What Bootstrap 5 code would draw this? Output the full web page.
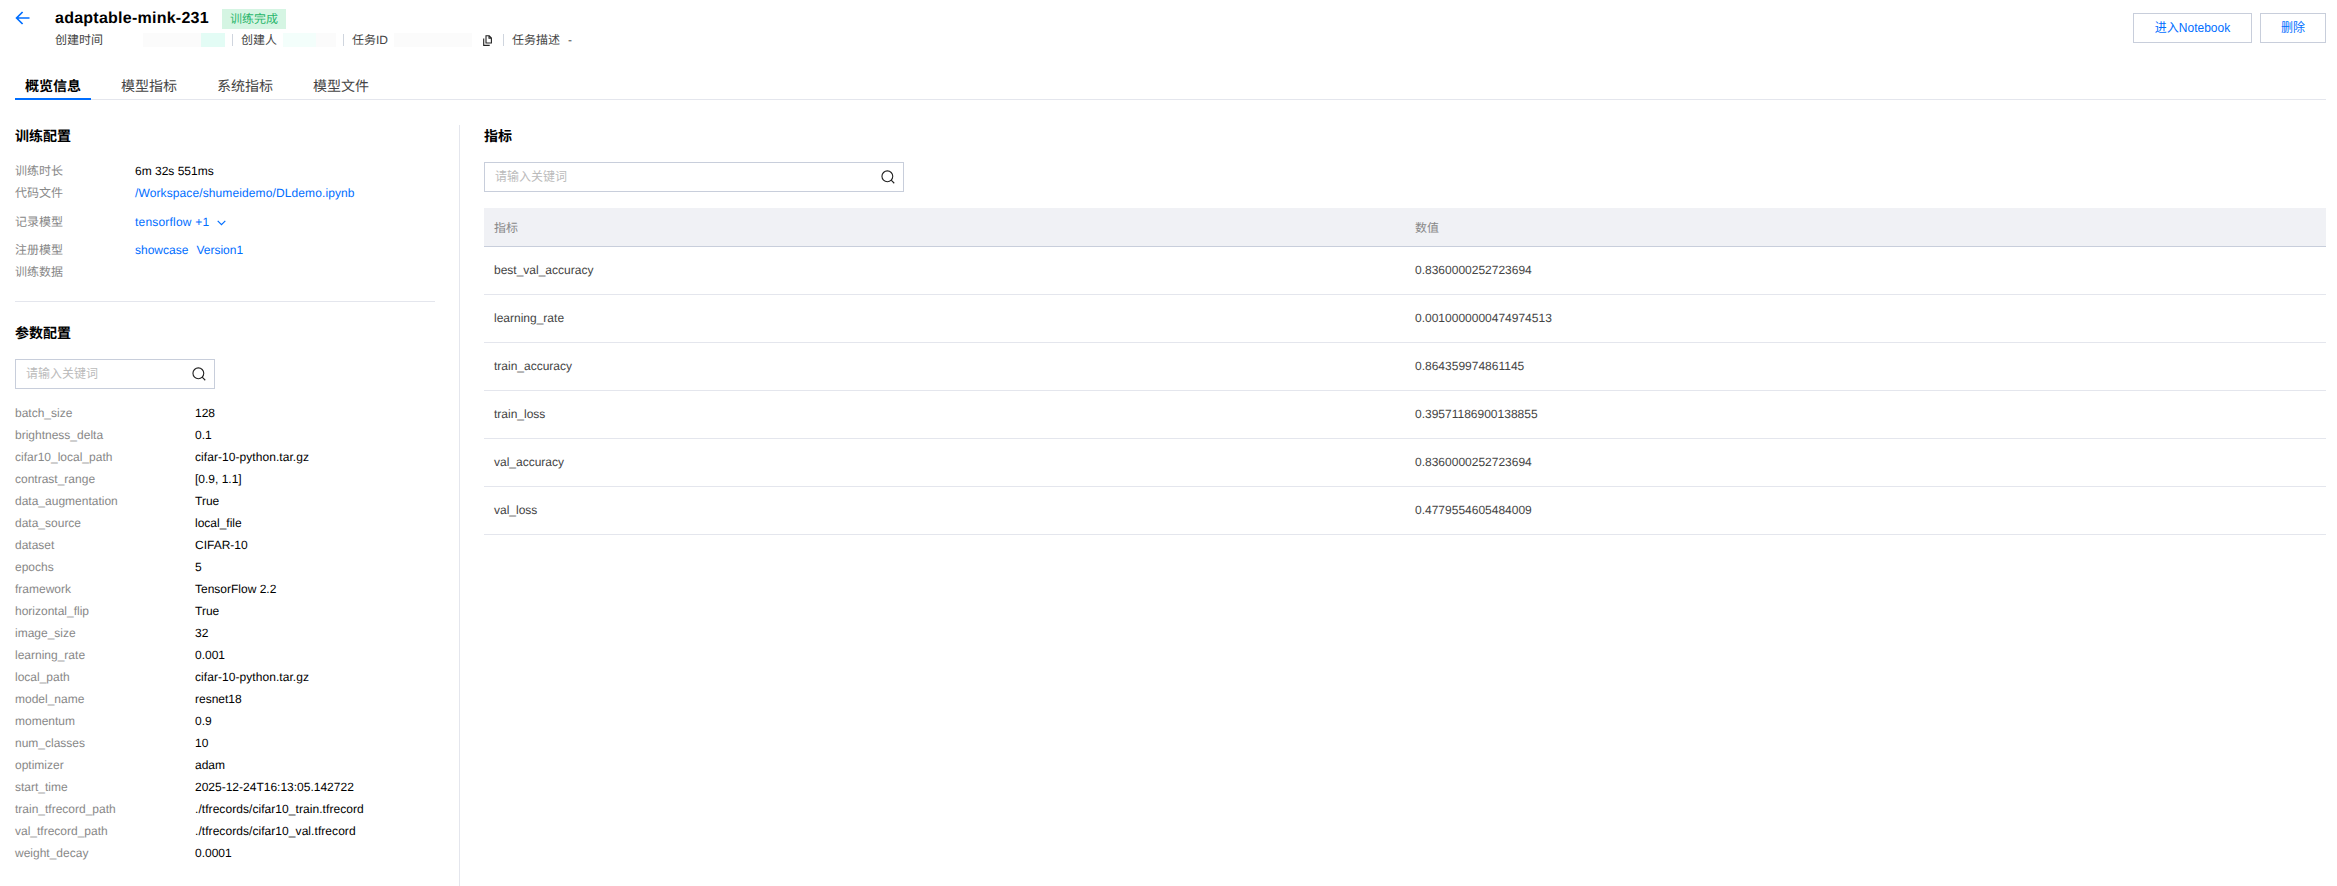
<!DOCTYPE html>
<html lang="zh">
<head>
<meta charset="utf-8">
<title>adaptable-mink-231</title>
<link href="https://cdn.jsdelivr.net/npm/bootstrap@5.3.0/dist/css/bootstrap.min.css" rel="stylesheet">
<style>
html,body{height:100%;overflow:hidden}
body{font-family:"Liberation Sans","Noto Sans CJK SC",sans-serif;font-size:12px;line-height:22px;color:#000;background:#fff;text-rendering:geometricPrecision}
.page-wrap{height:886px;padding:0 11px 0 15px;display:flex;flex-direction:column}
.top-head{height:71px;padding-top:9px}
.back-btn{width:40px;padding-top:2px;line-height:0}
.job-title{font-size:16px;font-weight:700;line-height:20px;color:#000;margin:0;letter-spacing:.25px}
.status-tag{background:#d5f5e3;color:#29b56b;font-size:12px;font-weight:400;line-height:20px;padding:0 8px;border-radius:0;margin-left:13px}
.meta-row{height:14px;line-height:14px;margin-top:4px;color:#444;white-space:nowrap}
.meta-sep{width:1px;height:12px;background:#cfd5de;margin:0 8px 0 7px}
.mask{height:14px;display:inline-block}
.mask-grey{background:#fbfbfb}
.mask-mint{background:#e3fcf5}
.mask-pale{background:#f3fefb}
.copy-ico{margin-left:11px}
.act-btn{height:30px;border:1px solid #c8cedb;border-radius:0;background:#fff;color:#006eff;font-size:12px;line-height:28px;padding:0}
.act-btn:hover{color:#006eff;background:#fff;border-color:#c8cedb}
.act-nb{width:119px}
.act-del{width:66px}
.tab-strip{border-bottom:1px solid #e4e6ed;height:29px;gap:20px;flex:none}
.tab-strip .nav-link{padding:0 10px;height:29px;line-height:30px;font-size:14px;color:#444;border-bottom:2px solid transparent;position:relative}
.tab-strip .nav-link.active{color:#000;font-weight:700;border-bottom-color:#006eff}
.body-split{flex:1;min-height:0;margin-top:25px}
.left-pane{width:445px;flex:none;padding-right:24px;border-right:1px solid #e4e6ed}
.right-pane{flex:1;padding-left:24px;min-width:0}
.sec-title{font-size:14px;font-weight:700;line-height:22px;color:#000;margin:0}
.kv{display:flex;height:22px;line-height:22px}
.kv-k{width:120px;flex:none;color:#888}
.kv-k2{width:180px;flex:none;color:#888}
.kv a{color:#006eff;text-decoration:none}
.path-link{letter-spacing:.11px}
.model-link{letter-spacing:.2px}
.val-wide{letter-spacing:.06px}
.sep-line{margin:0;border:0;border-top:1px solid #e4e6ed;opacity:1}
.search-box{height:30px;border:1px solid #c8cedb;border-radius:0;display:flex;align-items:center;padding:0 8px 0 10px;background:#fff}
.search-box input{border:0;outline:0;padding:0;font-size:12px;line-height:20px;flex:1;min-width:0;background:transparent;box-shadow:none;border-radius:0}
.search-box input::placeholder{color:#bbb;opacity:1}
.search-sm{width:200px}
.search-lg{width:420px}
.metric-table{margin:16px 0 0;--bs-table-border-color:#e4e6ed;table-layout:fixed;width:100%}
.metric-table th{background:#f0f1f5;color:#888;font-weight:400;height:38px;padding:2px 10px 0;vertical-align:middle;border-bottom:1px solid #c8cedb;box-shadow:none;font-size:12px}
.metric-table td{height:48px;padding:0 10px;vertical-align:middle;color:#444;border-bottom:1px solid #e4e6ed;font-size:12px}
</style>
</head>
<body>
<div class="page-wrap">
  <header class="top-head d-flex justify-content-between align-items-start">
    <div class="d-flex">
      <div class="back-btn">
        <svg width="15" height="14" viewBox="0 0 15 14" fill="none" stroke="#006eff" stroke-width="1.7"><path d="M14.5 7H1.8M7.6 1 1.6 7l6 6"/></svg>
      </div>
      <div>
        <div class="d-flex align-items-center">
          <h1 class="job-title">adaptable-mink-231</h1>
          <span class="badge status-tag">训练完成</span>
        </div>
        <div class="meta-row d-flex align-items-center">
          <span style="width:88px">创建时间</span><span class="mask mask-grey" style="width:58px"></span><span class="mask mask-mint" style="width:24px"></span>
          <span class="meta-sep"></span>
          <span style="width:42px">创建人</span><span class="mask mask-pale" style="width:33px"></span><span class="mask mask-grey" style="width:20px"></span>
          <span class="meta-sep"></span>
          <span style="width:42px">任务ID</span><span class="mask mask-grey" style="width:78px"></span>
          <svg class="copy-ico" width="9" height="11" viewBox="0 0 9 11" fill="none" stroke="#222" stroke-width="1.1"><path d="M3 .8h3.2l2.2 2.2v5H3zM6 .8V3.2h2.4M.7 3.4v7h6"/></svg>
          <span class="meta-sep" style="margin-left:11px"></span>
          <span>任务描述</span><span class="ms-2">-</span>
        </div>
      </div>
    </div>
    <div class="d-flex gap-2 pt-1">
      <button type="button" class="btn act-btn act-nb">进入Notebook</button>
      <button type="button" class="btn act-btn act-del">删除</button>
    </div>
  </header>
  <ul class="nav tab-strip">
    <li class="nav-item"><a class="nav-link active" href="#">概览信息</a></li>
    <li class="nav-item"><a class="nav-link" href="#">模型指标</a></li>
    <li class="nav-item"><a class="nav-link" href="#">系统指标</a></li>
    <li class="nav-item"><a class="nav-link" href="#">模型文件</a></li>
  </ul>
  <div class="body-split d-flex">
    <aside class="left-pane">
      <h2 class="sec-title">训练配置</h2>
      <div style="margin-top:13px">
        <div class="kv"><span class="kv-k">训练时长</span><span>6m 32s 551ms</span></div>
        <div class="kv"><span class="kv-k">代码文件</span><a href="#" class="path-link">/Workspace/shumeidemo/DLdemo.ipynb</a></div>
        <div class="kv" style="margin-top:7px"><span class="kv-k">记录模型</span><a href="#" class="model-link">tensorflow +1 <svg class="ms-1" width="9" height="6" viewBox="0 0 9 6" fill="none" stroke="#006eff" stroke-width="1.2"><path d="M.7.8 4.5 4.6 8.3.8"/></svg></a></div>
        <div class="kv" style="margin-top:6px"><span class="kv-k">注册模型</span><a href="#">showcase</a><a href="#" class="ms-2">Version1</a></div>
        <div class="kv"><span class="kv-k">训练数据</span></div>
      </div>
      <hr class="sep-line" style="margin-top:18px">
      <h2 class="sec-title" style="margin-top:20px">参数配置</h2>
      <div class="search-box search-sm" style="margin-top:15px">
        <input type="text" class="form-control" placeholder="请输入关键词">
        <svg width="14" height="14" viewBox="0 0 15 15" fill="none" stroke="#222" stroke-width="1.2"><circle cx="6.8" cy="6.8" r="5.8"/><path d="m10.9 10.9 3.3 3.3"/></svg>
      </div>
      <div style="margin-top:13px" id="params"></div>
    </aside>
    <main class="right-pane">
      <h2 class="sec-title">指标</h2>
      <div class="search-box search-lg" style="margin-top:15px">
        <input type="text" class="form-control" placeholder="请输入关键词">
        <svg width="14" height="14" viewBox="0 0 15 15" fill="none" stroke="#222" stroke-width="1.2"><circle cx="6.8" cy="6.8" r="5.8"/><path d="m10.9 10.9 3.3 3.3"/></svg>
      </div>
      <table class="table metric-table">
        <thead><tr><th>指标</th><th>数值</th></tr></thead>
        <tbody>
          <tr><td>best_val_accuracy</td><td>0.8360000252723694</td></tr>
          <tr><td>learning_rate</td><td>0.0010000000474974513</td></tr>
          <tr><td>train_accuracy</td><td>0.864359974861145</td></tr>
          <tr><td>train_loss</td><td>0.39571186900138855</td></tr>
          <tr><td>val_accuracy</td><td>0.8360000252723694</td></tr>
          <tr><td>val_loss</td><td>0.4779554605484009</td></tr>
        </tbody>
      </table>
    </main>
  </div>
</div>
<script>
const params=[["batch_size","128"],["brightness_delta","0.1"],["cifar10_local_path","cifar-10-python.tar.gz"],["contrast_range","[0.9, 1.1]"],["data_augmentation","True"],["data_source","local_file"],["dataset","CIFAR-10"],["epochs","5"],["framework","TensorFlow 2.2"],["horizontal_flip","True"],["image_size","32"],["learning_rate","0.001"],["local_path","cifar-10-python.tar.gz"],["model_name","resnet18"],["momentum","0.9"],["num_classes","10"],["optimizer","adam"],["start_time","2025-12-24T16:13:05.142722"],["train_tfrecord_path","./tfrecords/cifar10_train.tfrecord"],["val_tfrecord_path","./tfrecords/cifar10_val.tfrecord"],["weight_decay","0.0001"]];
document.getElementById("params").innerHTML=params.map(([k,v])=>`<div class="kv"><span class="kv-k2">${k}</span><span class="${v.startsWith("./")||v.startsWith("cifar")?"val-wide":""}">${v}</span></div>`).join("");
</script>
<script src="https://cdn.jsdelivr.net/npm/bootstrap@5.3.0/dist/js/bootstrap.bundle.min.js"></script>
</body>
</html>
